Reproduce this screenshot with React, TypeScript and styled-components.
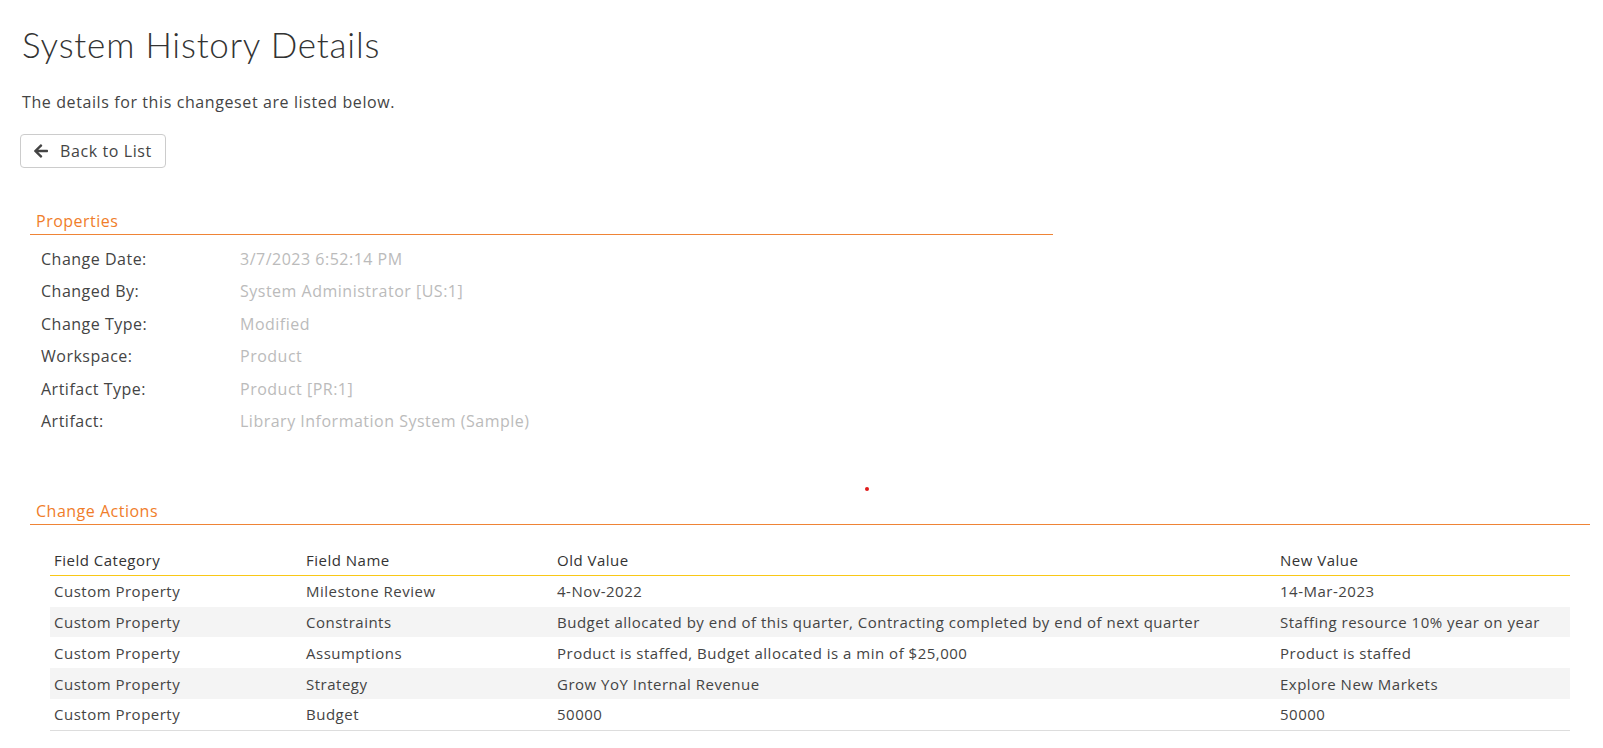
import React from 'react';
import styled, { createGlobalStyle } from 'styled-components';
import { FaArrowLeft } from 'react-icons/fa';

const GlobalStyle = createGlobalStyle`
    html, body {
        margin: 0;
        padding: 0;
        background: #fff;
    }
    body {
        font-family: "Open Sans", "Liberation Sans", sans-serif;
        color: #444;
        letter-spacing: 0.5px;
    }
`;

const Page = styled.div`
    padding: 0 13px 0 20px;
`;

const Title = styled.h1`
    margin: 24px 0 0 2px;
    font-family: Lato, "Open Sans", sans-serif;
    font-weight: 300;
    font-size: 35px;
    line-height: 40px;
    color: #333;
    letter-spacing: 0.8px;
`;

const Intro = styled.p`
    margin: 27px 0 0 2px;
    font-size: 16px;
    line-height: 22px;
    color: #444;
    letter-spacing: 0.6px;
`;

const BackButton = styled.button`
    display: flex;
    align-items: center;
    gap: 11px;
    margin-top: 21px;
    height: 34px;
    padding: 0 13px 0 12px;
    border: 1px solid #ccc;
    border-radius: 4px;
    background: #fff;
    font-family: inherit;
    font-size: 16px;
    line-height: 22px;
    letter-spacing: 0.6px;
    color: #444;
    cursor: pointer;
`;

const SectionHeader = styled.div<{ $width: number; $top: number }>`
    width: ${(p) => p.$width}px;
    margin: ${(p) => p.$top}px 0 0 10px;
    padding: 0 0 2px 6px;
    box-sizing: border-box;
    border-bottom: 1px solid #ef8436;
    font-size: 16px;
    line-height: 22px;
    color: #f07d2a;
`;

const PropList = styled.div`
    margin: 8px 0 0 10px;
    display: flex;
    flex-direction: column;
`;

const PropRow = styled.div`
    display: grid;
    grid-template-columns: 199px 1fr;
    padding-left: 11px;
    height: 32.4px;
    line-height: 32.4px;
    font-size: 16px;
`;

const PropLabel = styled.span`
    color: #444;
`;

const PropValue = styled.span`
    color: #bbb;
`;

const Spinner = styled.div`
    height: 63px;
    box-sizing: border-box;
    padding: 50px 0 0 845px;
`;

const Dot = styled.span`
    display: block;
    width: 4px;
    height: 4px;
    border-radius: 50%;
    background: #e01b1b;
`;

const Table = styled.table`
    width: 1520px;
    margin: 20px 0 0 30px;
    border-collapse: collapse;
    table-layout: fixed;
    font-size: 15px;
    color: #333;
    border-bottom: 1px solid #ddd;
`;

const Th = styled.th<{ $w: number }>`
    width: ${(p) => p.$w}px;
    height: 30px;
    padding: 0 4px;
    text-align: left;
    font-weight: 400;
    color: #333;
    border-bottom: 1px solid #f9c817;
    box-sizing: border-box;
`;

const Tr = styled.tr<{ $striped: boolean }>`
    background: ${(p) => (p.$striped ? '#f4f4f4' : '#fff')};
`;

const Td = styled.td`
    height: 30.8px;
    padding: 0 4px;
    white-space: nowrap;
    color: #444;
`;

const props = [
    ['Change Date:', '3/7/2023 6:52:14 PM'],
    ['Changed By:', 'System Administrator [US:1]'],
    ['Change Type:', 'Modified'],
    ['Workspace:', 'Product'],
    ['Artifact Type:', 'Product [PR:1]'],
    ['Artifact:', 'Library Information System (Sample)'],
];

const columns: [string, number][] = [
    ['Field Category', 252],
    ['Field Name', 251],
    ['Old Value', 723],
    ['New Value', 294],
];

const actions = [
    ['Custom Property', 'Milestone Review', '4-Nov-2022', '14-Mar-2023'],
    ['Custom Property', 'Constraints', 'Budget allocated by end of this quarter, Contracting completed by end of next quarter', 'Staffing resource 10% year on year'],
    ['Custom Property', 'Assumptions', 'Product is staffed, Budget allocated is a min of $25,000', 'Product is staffed'],
    ['Custom Property', 'Strategy', 'Grow YoY Internal Revenue', 'Explore New Markets'],
    ['Custom Property', 'Budget', '50000', '50000'],
];

const App = () => {
    return (
        <Page>
            <GlobalStyle />
            <Title>System History Details</Title>
            <Intro>The details for this changeset are listed below.</Intro>
            <BackButton>
                <FaArrowLeft size={16} />
                Back to List
            </BackButton>

            <SectionHeader $width={1023} $top={42}>Properties</SectionHeader>
            <PropList>
                {props.map(([label, value]) => (
                    <PropRow key={label}>
                        <PropLabel>{label}</PropLabel>
                        <PropValue>{value}</PropValue>
                    </PropRow>
                ))}
            </PropList>

            <Spinner>
                <Dot />
            </Spinner>

            <SectionHeader $width={1560} $top={0}>Change Actions</SectionHeader>
            <Table>
                <thead>
                    <tr>
                        {columns.map(([name, w]) => (
                            <Th key={name} $w={w}>{name}</Th>
                        ))}
                    </tr>
                </thead>
                <tbody>
                    {actions.map((row, i) => (
                        <Tr key={i} $striped={i % 2 === 1}>
                            {row.map((cell, j) => (
                                <Td key={j}>{cell}</Td>
                            ))}
                        </Tr>
                    ))}
                </tbody>
            </Table>
        </Page>
    );
};

export default App;
